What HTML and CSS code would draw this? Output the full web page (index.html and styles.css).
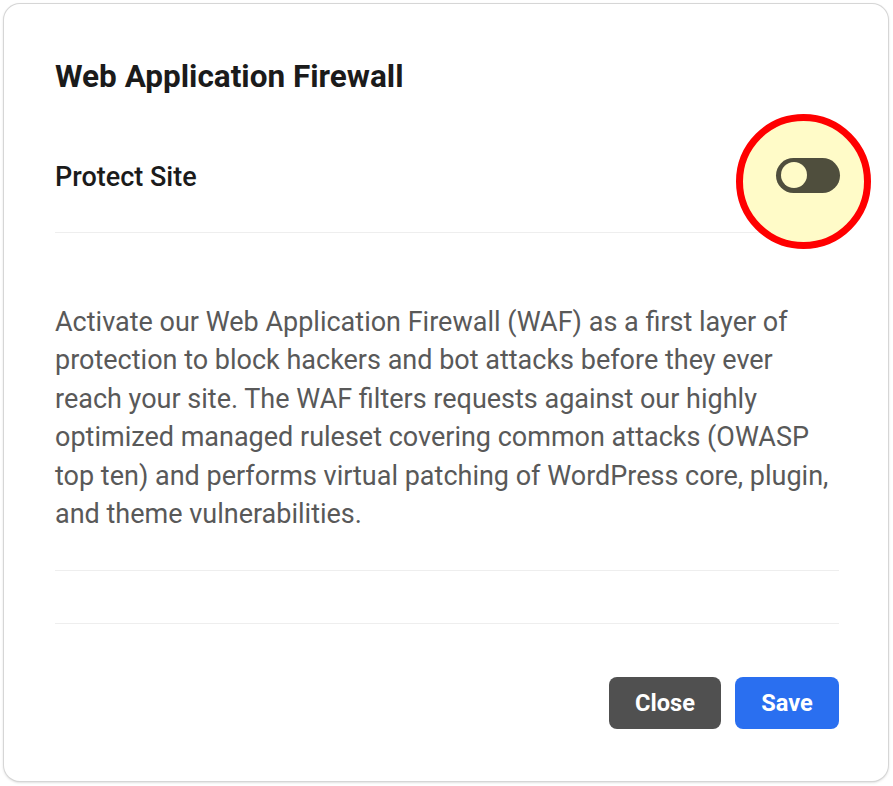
FILE: index.html
```html
<!DOCTYPE html>
<html lang="en">

<head>
    <meta charset="UTF-8">
    <meta name="viewport" content="width=device-width, initial-scale=1.0">
    <title>Web Application Firewall</title>
    <link rel="stylesheet" href="styles.css">
</head>

<body>
    <div class="modal">
        <h2 class="modal-title">Web Application Firewall</h2>

        <!-- 开关行 -->
        <div class="setting-row">
            <span class="setting-label">Protect Site</span>
            <span class="highlight">
                <span class="switch"><i></i></span>
            </span>
        </div>

        <div class="modal-body">
            <p>Activate our Web Application Firewall (WAF) as a first layer of protection to block hackers and bot attacks before they ever reach your site. The WAF filters requests against our highly optimized managed ruleset covering common attacks (OWASP top ten) and performs virtual patching of WordPress core, plugin, and theme vulnerabilities.</p>
        </div>

        <div class="spacer"></div>

        <div class="modal-footer">
            <button class="btn btn-close">Close</button>
            <button class="btn btn-save">Save</button>
        </div>
    </div>
</body>

</html>
```

FILE: styles.css
```css
* {
    padding: 0;
    margin: 0;
    box-sizing: border-box;
}

body {
    background-color: #fff;
    font-family: Roboto, "Liberation Sans", sans-serif;
    padding: 4px;
}

.modal {
    width: 884px;
    height: 777px;
    padding: 52px 49px 0 51px;
    background-color: #fff;
    border-radius: 16px;
    box-shadow: 0 0 0 1px #d6d6d6, 0 1px 3px rgba(0, 0, 0, 0.25);
}

.modal-title {
    font-size: 31.5px;
    font-weight: 700;
    line-height: 42px;
    color: #1b1b1b;
}

.setting-row {
    display: flex;
    justify-content: space-between;
    align-items: flex-start;
    height: 135px;
    border-bottom: 1px solid #eeeeee;
}

.setting-label {
    margin-top: 61px;
    font-size: 27px;
    font-weight: 500;
    color: #1b1b1b;
    line-height: 36px;
}

/* 黄色圈 */
.highlight {
    display: flex;
    align-items: center;
    justify-content: center;
    width: 135px;
    height: 135px;
    margin-top: 16px;
    margin-right: -32px;
    border: 7px solid #ff0000;
    border-radius: 50%;
    background-color: #fffbc8;
}

.switch {
    display: flex;
    align-items: center;
    width: 64px;
    height: 35px;
    margin-top: -13px;
    margin-left: 9px;
    padding-left: 5px;
    background-color: #4f4e3d;
    border-radius: 18px;
}

.switch i {
    width: 26px;
    height: 26px;
    border-radius: 50%;
    background-color: #fffbc8;
}

.modal-body {
    padding: 70px 0 37px;
    border-bottom: 1px solid #eeeeee;
}

.modal-body p {
    font-size: 27px;
    line-height: 38.4px;
    color: #595959;
}

.spacer {
    height: 53px;
    border-bottom: 1px solid #eeeeee;
}

.modal-footer {
    display: flex;
    justify-content: flex-end;
    gap: 14px;
    padding-top: 53px;
}

.btn {
    height: 52px;
    border: 0;
    border-radius: 8px;
    font-family: Roboto, "Liberation Sans", sans-serif;
    font-size: 23.6px;
    font-weight: 700;
    color: #fff;
    cursor: pointer;
}

.btn-close {
    width: 112px;
    background-color: #505050;
}

.btn-save {
    width: 104px;
    background-color: #2a6ff0;
}
```
